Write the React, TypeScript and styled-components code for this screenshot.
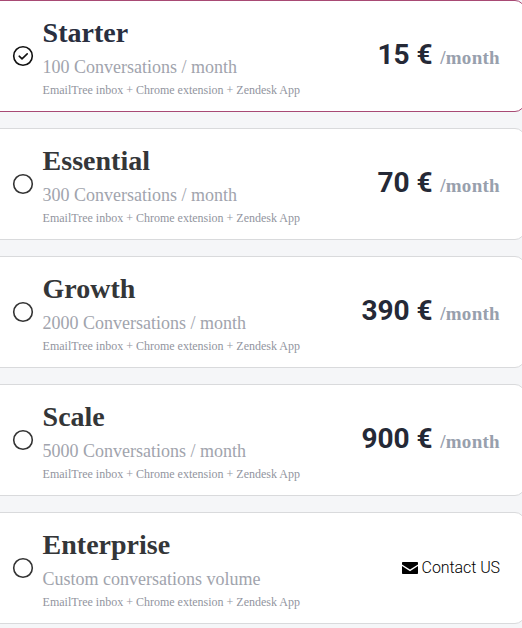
import React, { useState } from "react";
import styled, { createGlobalStyle } from "styled-components";

const GlobalStyle = createGlobalStyle`
  * { box-sizing: border-box; }
  body {
    margin: 0;
    background: #f5f6f8;
    overflow: hidden;
  }
`;

const PlanList = styled.div`
  display: flex;
  flex-direction: column;
  gap: 16px;
  width: 539px;
  height: 628px;
  margin-left: -14px;
  overflow: hidden;
`;

const PlanCard = styled.div<{ $selected: boolean }>`
  display: flex;
  flex: none;
  align-items: center;
  height: 112px;
  padding: 0 24px 0 25px;
  background: #fff;
  border: 1px solid ${(p) => (p.$selected ? "#a84a74" : "#d9dadc")};
  border-radius: 10px;
  cursor: pointer;
`;

const Radio = styled.svg<{ $selected: boolean }>`
  flex: none;
  width: 22px;
  height: 22px;
  fill: none;
  stroke: ${(p) => (p.$selected ? "#111" : "#333")};
  stroke-width: 1.6;
  stroke-linecap: round;
  stroke-linejoin: round;
`;

const Details = styled.div`
  display: flex;
  flex: 1;
  flex-direction: column;
  margin-left: 8.6px;
  font-family: "Liberation Serif", "Times New Roman", serif;
  white-space: nowrap;
`;

const PlanName = styled.div<{ $selected: boolean }>`
  font-size: 28px;
  line-height: 36px;
  font-weight: 700;
  color: ${(p) => (p.$selected ? "#292f40" : "#343638")};
`;

const Quota = styled.div`
  font-size: 18px;
  line-height: 32px;
  color: #a1a4ad;
`;

const Features = styled.div`
  font-size: 12px;
  line-height: 14px;
  color: #9295a0;
`;

const Price = styled.div`
  font-family: Roboto, sans-serif;
  font-size: 28px;
  line-height: 36px;
  font-weight: 700;
  color: #252936;
  white-space: pre;
`;

const Period = styled.span`
  margin-left: 7.5px;
  font-family: "Liberation Serif", "Times New Roman", serif;
  font-size: 19px;
  letter-spacing: 0.3px;
  color: #98a0ad;
`;

const Contact = styled.div`
  display: flex;
  align-items: center;
  gap: 4px;
  margin-top: -2px;
  font-family: Roboto, sans-serif;
  font-size: 16px;
  letter-spacing: -0.08px;
  font-weight: 300;
  color: #000;
`;

const Envelope = styled.svg`
  width: 16px;
  height: 16px;
  margin-top: 1px;
  fill: currentColor;
`;

const plans = [
  { name: "Starter", quota: "100 Conversations / month", price: "15 €" },
  { name: "Essential", quota: "300 Conversations / month", price: "70 €" },
  { name: "Growth", quota: "2000 Conversations / month", price: "390 €" },
  { name: "Scale", quota: "5000 Conversations / month", price: "900 €" },
  { name: "Enterprise", quota: "Custom conversations volume", price: null },
];

export default function App() {
  const [selected, setSelected] = useState("Starter");
  return (
    <>
      <GlobalStyle />
      <PlanList>
        {plans.map((plan) => {
          const active = plan.name === selected;
          return (
            <PlanCard key={plan.name} $selected={active} onClick={() => setSelected(plan.name)}>
              <Radio $selected={active} viewBox="0 0 22 22">
                <circle cx="11" cy="11" r="9.3" />
                {active && <path d="M7.2 11.2l2.8 2.6 5.2-5" />}
              </Radio>
              <Details>
                <PlanName $selected={active}>{plan.name}</PlanName>
                <Quota>{plan.quota}</Quota>
                <Features>EmailTree inbox + Chrome extension + Zendesk App</Features>
              </Details>
              {plan.price ? (
                <Price>
                  {plan.price}
                  <Period>/month</Period>
                </Price>
              ) : (
                <Contact>
                  <Envelope viewBox="0 0 16 16">
                    <path d="M0 2.8Q0 2 .8 2H15.2Q16 2 16 2.8V4.5L8 9.6L0 4.5ZM0 6L8 11.2L16 6V13.2Q16 14 15.2 14H.8Q0 14 0 13.2Z" />
                  </Envelope>
                  Contact US
                </Contact>
              )}
            </PlanCard>
          );
        })}
      </PlanList>
    </>
  );
}
